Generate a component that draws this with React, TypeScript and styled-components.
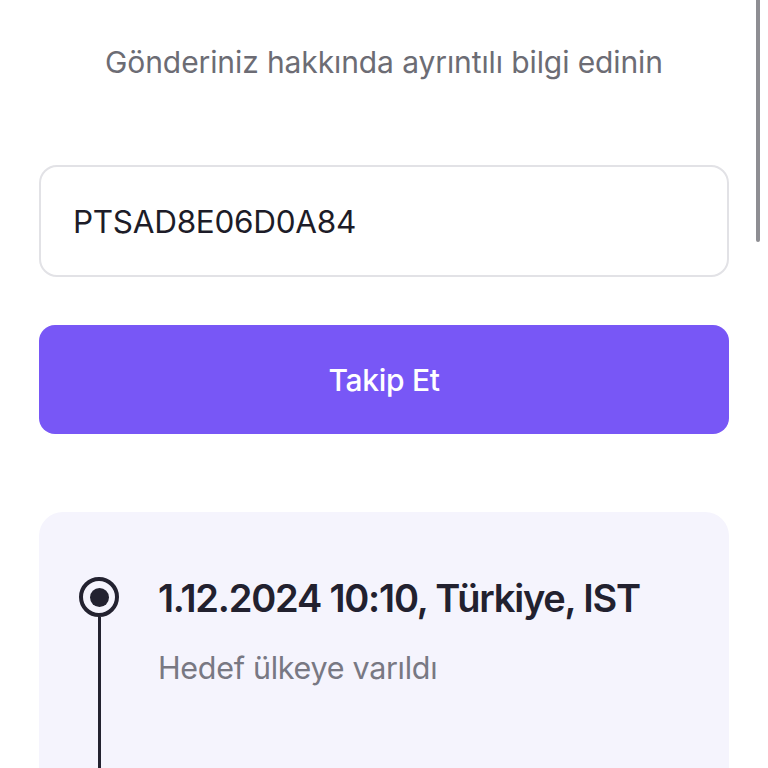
import styled, { createGlobalStyle } from "styled-components";

const GlobalStyle = createGlobalStyle`
  html, body {
    margin: 0;
    padding: 0;
    background: #ffffff;
    overflow: hidden;
  }
  body {
    font-family: Inter, "Noto Sans", "Liberation Sans", sans-serif;
  }
`;

const Screen = styled.div`
  position: relative;
  width: 768px;
  height: 768px;
  overflow: hidden;
  background: #ffffff;
  box-sizing: border-box;
  padding: 42px 39px 0 39px;
  display: flex;
  flex-direction: column;

  & > * {
    flex-shrink: 0;
  }
`;

const ScrollThumb = styled.div`
  position: absolute;
  top: -6px;
  right: 8px;
  width: 4px;
  height: 248px;
  border-radius: 2px;
  background: #8e8e93;
`;

const Subtitle = styled.p`
  margin: 0;
  text-align: center;
  font-size: 30px;
  line-height: 40px;
  color: #6c6c74;
  letter-spacing: -0.1px;
`;

const TrackInput = styled.input`
  margin-top: 83px;
  height: 112px;
  box-sizing: border-box;
  border: 2px solid #e2e2e6;
  border-radius: 18px;
  padding: 0 32px;
  font-family: inherit;
  font-size: 31.5px;
  color: #1d1c28;
  letter-spacing: -0.3px;
  background: #ffffff;
  outline: none;
`;

const TrackButton = styled.button`
  margin-top: 48px;
  height: 109px;
  border: none;
  border-radius: 16px;
  background: #7857f6;
  color: #ffffff;
  font-family: inherit;
  font-size: 30px;
  font-weight: 500;
  letter-spacing: -0.3px;
  cursor: pointer;
`;

const HistoryCard = styled.div`
  margin-top: 78px;
  background: #f5f4fd;
  border-radius: 24px 24px 0 0;
  padding: 65px 0 0 40px;
  flex: 1 0 auto;
  display: flex;
  flex-direction: column;
`;

const EventRow = styled.div`
  display: grid;
  grid-template-columns: 40px 1fr;
  column-gap: 39px;
`;

const Marker = styled.div`
  display: flex;
  flex-direction: column;
  align-items: center;
`;

const Dot = styled.div`
  width: 40px;
  height: 40px;
  box-sizing: border-box;
  border: 4px solid #232230;
  border-radius: 50%;
  display: flex;
  align-items: center;
  justify-content: center;
  flex-shrink: 0;

  &::after {
    content: "";
    width: 19px;
    height: 19px;
    border-radius: 50%;
    background: #232230;
  }
`;

const Stem = styled.div`
  width: 3px;
  height: 200px;
  background: #232230;
`;

const EventText = styled.div`
  display: flex;
  flex-direction: column;
`;

const EventTitle = styled.div`
  font-size: 38px;
  line-height: 42px;
  font-weight: 600;
  color: #22212f;
  letter-spacing: -1.2px;
`;

const EventNote = styled.div`
  margin-top: 32px;
  font-size: 30.5px;
  line-height: 34px;
  color: #787883;
  letter-spacing: -0.3px;
`;

const App = () => {
  return (
    <>
      <GlobalStyle />
      <Screen>
        <ScrollThumb />
        <Subtitle>Gönderiniz hakkında ayrıntılı bilgi edinin</Subtitle>
        <TrackInput defaultValue="PTSAD8E06D0A84" />
        <TrackButton>Takip Et</TrackButton>
        <HistoryCard>
          <EventRow>
            <Marker>
              <Dot />
              <Stem />
            </Marker>
            <EventText>
              <EventTitle>1.12.2024 10:10, Türkiye, IST</EventTitle>
              <EventNote>Hedef ülkeye varıldı</EventNote>
            </EventText>
          </EventRow>
        </HistoryCard>
      </Screen>
    </>
  );
};

export default App;
